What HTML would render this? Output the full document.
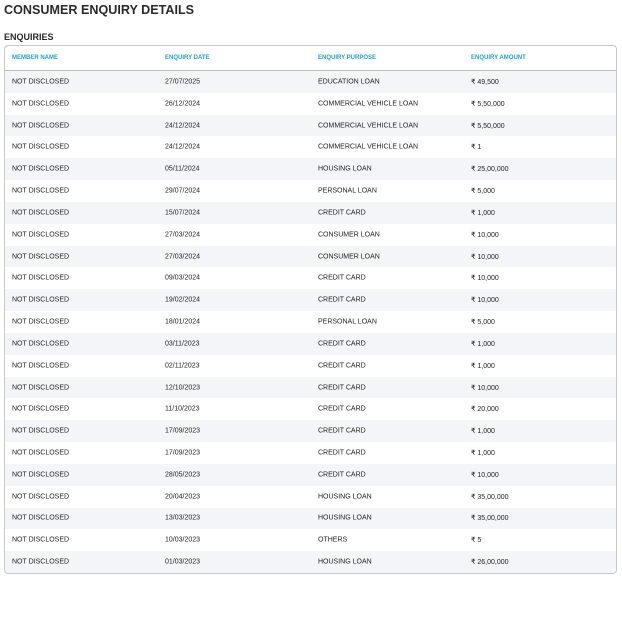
<!DOCTYPE html>
<html><head><style>
body{margin:0;background:#fff;font-family:"Liberation Sans",sans-serif;color:#222;}
h1{position:absolute;left:4px;top:3px;margin:0;font-size:12.6px;font-weight:bold;color:#2a2a2a}
h2{position:absolute;left:4px;top:32px;margin:0;font-size:9px;font-weight:bold;color:#2a2a2a}
.box{position:absolute;left:4px;top:45px;width:611px;height:527px;border:1px solid #c9c9cc;border-radius:4px;overflow:hidden}
.hd{height:24px;border-bottom:1px solid #bbb;position:relative}
.r{height:21.83px;position:relative}
.c{position:absolute;top:50%;transform:translateY(-50%);font-size:7px;white-space:nowrap}
.hd .c{color:#1aa6c8;font-weight:bold;font-size:6px}
.a{left:7px}.b{left:160px}.d{left:313px}.e{left:466px}
#rows .r:nth-child(odd){background:#f4f5f9}#rows .r:nth-child(even){background:#fff}
</style></head><body>
<h1>CONSUMER ENQUIRY DETAILS</h1>
<h2>ENQUIRIES</h2>
<div class="box">
<div class="hd"><span class="c a">MEMBER NAME</span><span class="c b">ENQUIRY DATE</span><span class="c d">ENQUIRY PURPOSE</span><span class="c e">ENQUIRY AMOUNT</span></div>
<div id="rows">
<div class="r"><span class="c a">NOT DISCLOSED</span><span class="c b">27/07/2025</span><span class="c d">EDUCATION LOAN</span><span class="c e">₹ 49,500</span></div>
<div class="r"><span class="c a">NOT DISCLOSED</span><span class="c b">26/12/2024</span><span class="c d">COMMERCIAL VEHICLE LOAN</span><span class="c e">₹ 5,50,000</span></div>
<div class="r"><span class="c a">NOT DISCLOSED</span><span class="c b">24/12/2024</span><span class="c d">COMMERCIAL VEHICLE LOAN</span><span class="c e">₹ 5,50,000</span></div>
<div class="r"><span class="c a">NOT DISCLOSED</span><span class="c b">24/12/2024</span><span class="c d">COMMERCIAL VEHICLE LOAN</span><span class="c e">₹ 1</span></div>
<div class="r"><span class="c a">NOT DISCLOSED</span><span class="c b">05/11/2024</span><span class="c d">HOUSING LOAN</span><span class="c e">₹ 25,00,000</span></div>
<div class="r"><span class="c a">NOT DISCLOSED</span><span class="c b">29/07/2024</span><span class="c d">PERSONAL LOAN</span><span class="c e">₹ 5,000</span></div>
<div class="r"><span class="c a">NOT DISCLOSED</span><span class="c b">15/07/2024</span><span class="c d">CREDIT CARD</span><span class="c e">₹ 1,000</span></div>
<div class="r"><span class="c a">NOT DISCLOSED</span><span class="c b">27/03/2024</span><span class="c d">CONSUMER LOAN</span><span class="c e">₹ 10,000</span></div>
<div class="r"><span class="c a">NOT DISCLOSED</span><span class="c b">27/03/2024</span><span class="c d">CONSUMER LOAN</span><span class="c e">₹ 10,000</span></div>
<div class="r"><span class="c a">NOT DISCLOSED</span><span class="c b">09/03/2024</span><span class="c d">CREDIT CARD</span><span class="c e">₹ 10,000</span></div>
<div class="r"><span class="c a">NOT DISCLOSED</span><span class="c b">19/02/2024</span><span class="c d">CREDIT CARD</span><span class="c e">₹ 10,000</span></div>
<div class="r"><span class="c a">NOT DISCLOSED</span><span class="c b">18/01/2024</span><span class="c d">PERSONAL LOAN</span><span class="c e">₹ 5,000</span></div>
<div class="r"><span class="c a">NOT DISCLOSED</span><span class="c b">03/11/2023</span><span class="c d">CREDIT CARD</span><span class="c e">₹ 1,000</span></div>
<div class="r"><span class="c a">NOT DISCLOSED</span><span class="c b">02/11/2023</span><span class="c d">CREDIT CARD</span><span class="c e">₹ 1,000</span></div>
<div class="r"><span class="c a">NOT DISCLOSED</span><span class="c b">12/10/2023</span><span class="c d">CREDIT CARD</span><span class="c e">₹ 10,000</span></div>
<div class="r"><span class="c a">NOT DISCLOSED</span><span class="c b">11/10/2023</span><span class="c d">CREDIT CARD</span><span class="c e">₹ 20,000</span></div>
<div class="r"><span class="c a">NOT DISCLOSED</span><span class="c b">17/09/2023</span><span class="c d">CREDIT CARD</span><span class="c e">₹ 1,000</span></div>
<div class="r"><span class="c a">NOT DISCLOSED</span><span class="c b">17/09/2023</span><span class="c d">CREDIT CARD</span><span class="c e">₹ 1,000</span></div>
<div class="r"><span class="c a">NOT DISCLOSED</span><span class="c b">28/05/2023</span><span class="c d">CREDIT CARD</span><span class="c e">₹ 10,000</span></div>
<div class="r"><span class="c a">NOT DISCLOSED</span><span class="c b">20/04/2023</span><span class="c d">HOUSING LOAN</span><span class="c e">₹ 35,00,000</span></div>
<div class="r"><span class="c a">NOT DISCLOSED</span><span class="c b">13/03/2023</span><span class="c d">HOUSING LOAN</span><span class="c e">₹ 35,00,000</span></div>
<div class="r"><span class="c a">NOT DISCLOSED</span><span class="c b">10/03/2023</span><span class="c d">OTHERS</span><span class="c e">₹ 5</span></div>
<div class="r"><span class="c a">NOT DISCLOSED</span><span class="c b">01/03/2023</span><span class="c d">HOUSING LOAN</span><span class="c e">₹ 26,00,000</span></div>
</div>
</div>
</body></html>
